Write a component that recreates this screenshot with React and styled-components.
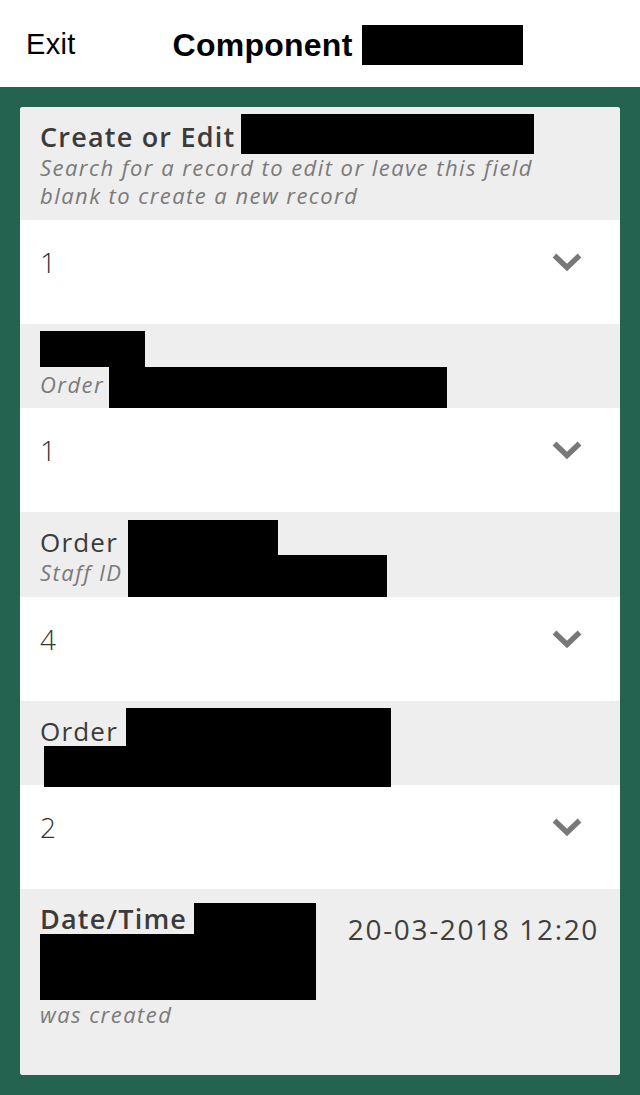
import React from "react";
import styled, { createGlobalStyle } from "styled-components";

const Global = createGlobalStyle`
  html, body { margin: 0; padding: 0; background: #236350; }
  body { font-family: "Open Sans", "Noto Sans", sans-serif; }
  * { box-sizing: border-box; }
`;

const Page = styled.div`
  display: flex;
  flex-direction: column;
  min-height: 100vh;
`;

const Header = styled.header`
  height: 87px;
  background: #ffffff;
  display: flex;
  align-items: center;
  padding: 2px 0 0 26px;
  font-family: "Liberation Sans", Arial, sans-serif;
  color: #000;
`;

const ExitButton = styled.span`
  font-size: 29px;
  line-height: 1;
  letter-spacing: 0.3px;
`;

const Title = styled.h1`
  margin: 0 0 0 97px;
  display: flex;
  align-items: center;
  font-size: 32px;
  font-weight: 700;
  line-height: 1;
  letter-spacing: 0.25px;
`;

const Mask = styled.span`
  display: inline-block;
  background: #000;
  width: ${(p) => p.w}px;
  height: ${(p) => p.h}px;
  margin-left: ${(p) => p.ml || 0}px;
`;

const Overlay = styled.span`
  position: absolute;
  background: #000;
  z-index: 2;
`;

const Stage = styled.main`
  flex: 1;
  background: #236350;
  padding: 20px;
  display: flex;
`;

const Card = styled.div`
  flex: 1;
  display: flex;
  flex-direction: column;
  border-radius: 3px;
  overflow: hidden;
  background: #eeeeee;
`;

const LabelBlock = styled.div`
  position: relative;
  background: #eeeeee;
  padding: 14px 21px ${(p) => p.pb}px 20px;
  min-height: ${(p) => p.minH || 0}px;
  display: flex;
  justify-content: space-between;
  align-items: flex-start;
  flex: ${(p) => (p.grow ? 1 : "none")};
`;

const LabelText = styled.div`
  display: flex;
  flex-direction: column;
`;

const FieldTitle = styled.div`
  font-size: ${(p) => (p.strong ? 27 : 26)}px;
  line-height: 32px;
  font-weight: ${(p) => (p.strong ? 600 : 400)};
  color: #3b3b3b;
  letter-spacing: 1.2px;
  white-space: nowrap;
`;

const FieldHint = styled.div`
  font-size: 22px;
  line-height: 28px;
  font-style: italic;
  color: #7a7a7a;
  letter-spacing: 1.45px;
  min-height: 28px;
  white-space: nowrap;
`;

const HintGap = styled.div`
  height: ${(p) => p.h}px;
`;

const DateValue = styled.div`
  margin-top: 6px;
  font-size: 28px;
  line-height: 40px;
  font-weight: 400;
  color: #3f3f3f;
  letter-spacing: 1.65px;
  white-space: nowrap;
`;

const SelectRow = styled.div`
  position: relative;
  background: #ffffff;
  height: 104px;
  padding: 22px 37px 0 20px;
  display: flex;
  align-items: flex-start;
  justify-content: space-between;
`;

const SelectValue = styled.span`
  font-size: 28px;
  line-height: 40px;
  font-weight: 300;
  color: #333;
`;

const ChevronBox = styled.span`
  display: flex;
  align-items: center;
  height: 40px;
`;

const Chevron = () => (
  <svg width="32" height="20" viewBox="0 0 32 20" aria-hidden="true">
    <polyline
      points="3.5,3.5 16,15.5 28.5,3.5"
      fill="none"
      stroke="#787878"
      strokeWidth="5.4"
      strokeLinejoin="miter"
    />
  </svg>
);

const Select = ({ value, masks = [] }) => (
  <SelectRow>
    <SelectValue>{value}</SelectValue>
    <ChevronBox>
      <Chevron />
    </ChevronBox>
    {masks.map((m, i) => (
      <Overlay key={i} style={{ left: m[0], top: m[1], width: m[2], height: m[3] }} />
    ))}
  </SelectRow>
);

const Label = ({ title, strong, hint, masks = [], children, minH, grow, hintGap, pb = 10 }) => (
  <LabelBlock minH={minH} grow={grow} pb={pb}>
    <LabelText>
      <FieldTitle strong={strong}>{title || "\u00a0"}</FieldTitle>
      {hintGap ? <HintGap h={hintGap} /> : null}
      <FieldHint>{hint || "\u00a0"}</FieldHint>
    </LabelText>
    {children}
    {masks.map((m, i) => (
      <Overlay key={i} style={{ left: m[0], top: m[1], width: m[2], height: m[3] }} />
    ))}
  </LabelBlock>
);

export default function App() {
  return (
    <>
      <Global />
      <Page>
        <Header>
          <ExitButton>Exit</ExitButton>
          <Title>
            Component
            <Mask w={161} h={40} ml={9} />
          </Title>
        </Header>
        <Stage>
          <Card>
            <Label
              title="Create or Edit"
              strong
              pb={11}
              hint={
                <>
                  Search for a record to edit or leave this field
                  <br />
                  blank to create a new record
                </>
              }
              masks={[[221, 7, 293, 40]]}
            />
            <Select value="1" />
            <Label
              hint="Order"
              masks={[
                [20, 7, 105, 36],
                [89, 43, 338, 41],
              ]}
            />
            <Select value="1" />
            <Label
              title="Order"
              hint="Staff ID"
              pb={11}
              masks={[
                [108, 8, 150, 35],
                [108, 43, 259, 42],
              ]}
            />
            <Select value="4" />
            <Label
              title="Order"
              masks={[
                [106, 7, 265, 38],
                [24, 45, 347, 39],
              ]}
            />
            <Select value="2" masks={[[24, 0, 347, 2]]} />
            <Label
              title="Date/Time"
              strong
              hint="was created"
              hintGap={65}
              grow
              minH={186}
              masks={[
                [174, 14, 122, 31],
                [20, 45, 276, 66],
              ]}
            >
              <DateValue>20-03-2018 12:20</DateValue>
            </Label>
          </Card>
        </Stage>
      </Page>
    </>
  );
}
